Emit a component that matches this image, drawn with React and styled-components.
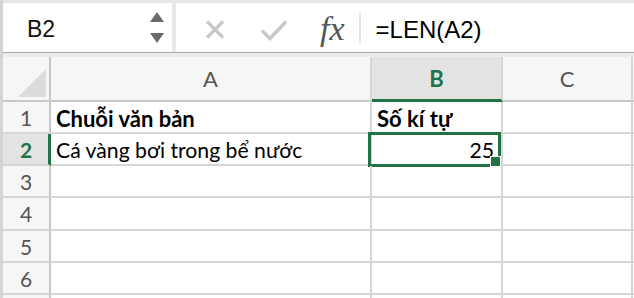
import styled, { createGlobalStyle } from 'styled-components';

const GlobalStyle = createGlobalStyle`
  html, body {
    margin: 0;
    padding: 0;
    background: #ffffff;
  }
  * {
    box-sizing: border-box;
  }
`;

const GREEN = '#217346';
const GRID = '#d6d6d6';
const CELL_FONT = `Lato, "Noto Sans", "Liberation Sans", sans-serif`;

const Sheet = styled.div`
  width: 634px;
  height: 298px;
  overflow: hidden;
  border-left: 3px solid #d4d4d4;
  background: #fff;
`;

const FormulaBar = styled.div`
  display: flex;
  height: 57px;
  border-top: 3px solid #e6e6e6;
  border-bottom: 4px solid #ececec;
  box-shadow: inset 0 -1px 0 #a8a8a8;
  padding-bottom: 1px;
`;

const NameBox = styled.div`
  width: 173px;
  display: flex;
  align-items: center;
  justify-content: space-between;
  padding: 0 8px 0 24px;
  border-right: 4px solid #e8e8e8;
  font-family: "Liberation Sans", Arial, sans-serif;
  font-size: 23px;
  color: #111;

  span {
    padding-top: 4px;
  }
`;

const Spinner = styled.div`
  display: flex;
  flex-direction: column;
  gap: 11px;
`;

const Arrow = styled.div`
  width: 0;
  height: 0;
  border-left: 7px solid transparent;
  border-right: 7px solid transparent;
  ${(p) =>
    p.$up
      ? `border-bottom: 10px solid #6a6a6a;`
      : `border-top: 10px solid #6a6a6a;`}
`;

const Tools = styled.div`
  flex: 1;
  display: flex;
  align-items: center;
  padding-left: 28px;
`;

const IconButton = styled.div`
  display: flex;
  align-items: center;
  margin-right: ${(p) => p.$gap}px;
  padding-top: 4px;
`;

const Fx = styled.span`
  font-family: "Liberation Serif", "Times New Roman", serif;
  font-style: italic;
  font-size: 34px;
  color: #555;
  margin-right: 14px;
  line-height: 1;
  padding-top: 2px;
`;

const Divider = styled.div`
  width: 2px;
  height: 30px;
  background: #e2e2e2;
  margin-right: 15px;
  align-self: flex-start;
  margin-top: 10px;
`;

const Formula = styled.span`
  font-family: "Liberation Sans", Arial, sans-serif;
  font-size: 24px;
  color: #000;
  padding-top: 4px;
`;

const Row = styled.div`
  display: flex;
  height: ${(p) => p.$h}px;
`;

const RowHead = styled.div`
  width: 48px;
  flex: none;
  display: flex;
  align-items: center;
  justify-content: center;
  background: ${(p) => (p.$active ? '#e3e3e3' : '#f6f6f6')};
  border-right: ${(p) => (p.$active ? `3px solid ${GREEN}` : '2px solid #c8c8c8')};
  border-bottom: 2px solid ${GRID};
  font-family: ${CELL_FONT};
  font-size: 21px;
  font-weight: ${(p) => (p.$active ? 700 : 400)};
  color: ${(p) => (p.$active ? GREEN : '#555')};
  padding-left: ${(p) => (p.$active ? 1 : 0)}px;
`;

const Corner = styled.div`
  width: 48px;
  flex: none;
  position: relative;
  background: #f6f6f6;
  border-right: 2px solid #c8c8c8;
  border-bottom: 2px solid #c8c8c8;
`;

const CornerTriangle = styled.div`
  position: absolute;
  right: 3px;
  bottom: 3px;
  width: 0;
  height: 0;
  border-left: 28px solid transparent;
  border-bottom: 28px solid #dcdcdc;
`;

const ColHead = styled.div`
  width: ${(p) => p.$w}px;
  flex: none;
  display: flex;
  align-items: center;
  justify-content: center;
  background: ${(p) => (p.$active ? '#e3e3e3' : '#f6f6f6')};
  border-right: 2px solid ${GRID};
  border-bottom: ${(p) => (p.$active ? `3px solid ${GREEN}` : '2px solid #c8c8c8')};
  font-family: ${CELL_FONT};
  font-size: 22px;
  font-weight: ${(p) => (p.$active ? 700 : 400)};
  color: ${(p) => (p.$active ? GREEN : '#555')};
  padding-top: ${(p) => (p.$active ? 1 : 0)}px;
`;

const Cell = styled.div`
  position: relative;
  width: ${(p) => p.$w}px;
  flex: none;
  display: flex;
  align-items: flex-end;
  justify-content: ${(p) => (p.$right ? 'flex-end' : 'flex-start')};
  padding: 0 7px 1px 5px;
  border-right: 2px solid ${GRID};
  border-bottom: 2px solid ${GRID};
  font-family: ${CELL_FONT};
  font-size: ${(p) => (p.$bold ? 22 : 21.2)}px;
  line-height: 25px;
  font-weight: ${(p) => (p.$bold ? 700 : 400)};
  color: #000;
  white-space: nowrap;
`;

const Selection = styled.div`
  position: absolute;
  left: -4px;
  top: -2px;
  right: 0;
  bottom: -3px;
  border: 3px solid ${GREEN};
  pointer-events: none;
`;

const FillHandle = styled.div`
  position: absolute;
  right: -3px;
  bottom: -3px;
  width: 11px;
  height: 11px;
  background: ${GREEN};
  border: 1px solid #fff;
`;

const COLS = [
  { key: 'A', w: 321 },
  { key: 'B', w: 131 },
  { key: 'C', w: 130 },
  { key: 'D', w: 130 },
];

const DATA = {
  1: { A: { text: 'Chuỗi văn bản', bold: true }, B: { text: 'Số kí tự', bold: true } },
  2: { A: { text: 'Cá vàng bơi trong bể nước' }, B: { text: '25', right: true } },
};

const XIcon = () => (
  <svg width="22" height="19" viewBox="0 0 22 19">
    <path d="M3 1.5 L19 17.5 M19 1.5 L3 17.5" stroke="#c8c8c8" strokeWidth="3.2" fill="none" />
  </svg>
);

const CheckIcon = () => (
  <svg width="28" height="22" viewBox="0 0 28 22">
    <path d="M2 11.5 L10 19.5 L26 2.5" stroke="#c8c8c8" strokeWidth="3.4" fill="none" />
  </svg>
);

const App = () => {
  return (
    <>
      <GlobalStyle />
      <Sheet>
        <FormulaBar>
          <NameBox>
            <span>B2</span>
            <Spinner>
              <Arrow $up />
              <Arrow />
            </Spinner>
          </NameBox>
          <Tools>
            <IconButton $gap={34}>
              <XIcon />
            </IconButton>
            <IconButton $gap={32}>
              <CheckIcon />
            </IconButton>
            <Fx>fx</Fx>
            <Divider />
            <Formula>=LEN(A2)</Formula>
          </Tools>
        </FormulaBar>

        <Row $h={45}>
          <Corner>
            <CornerTriangle />
          </Corner>
          {COLS.map((c) => (
            <ColHead key={c.key} $w={c.w} $active={c.key === 'B'}>
              {c.key !== 'D' ? c.key : ''}
            </ColHead>
          ))}
        </Row>

        {[1, 2, 3, 4, 5, 6].map((r) => (
          <Row key={r} $h={r === 4 ? 33 : 32}>
            <RowHead $active={r === 2}>{r}</RowHead>
            {COLS.map((c) => {
              const cell = DATA[r]?.[c.key];
              const selected = r === 2 && c.key === 'B';
              return (
                <Cell key={c.key} $w={c.w} $bold={cell?.bold} $right={cell?.right}>
                  {cell?.text}
                  {selected && (
                    <Selection>
                      <FillHandle />
                    </Selection>
                  )}
                </Cell>
              );
            })}
          </Row>
        ))}
        <Row $h={10}>
          <RowHead />
          {COLS.map((c) => (
            <Cell key={c.key} $w={c.w} />
          ))}
        </Row>
      </Sheet>
    </>
  );
};

export default App;
